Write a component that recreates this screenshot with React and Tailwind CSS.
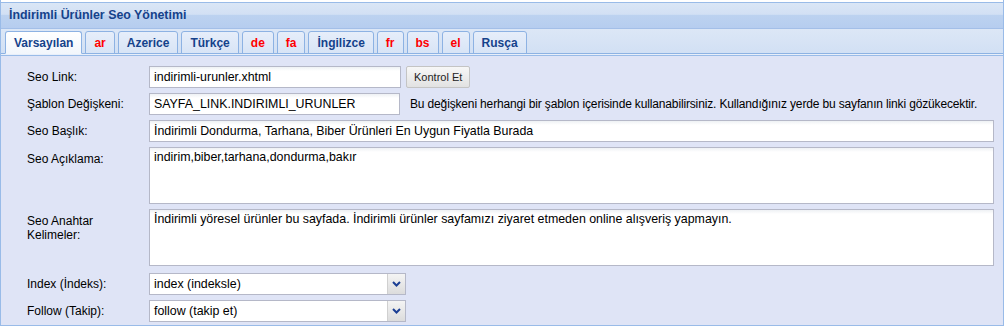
import { useState } from 'react';

const sekmeler = [
    { ad: 'Varsayılan', kod: false },
    { ad: 'ar', kod: true },
    { ad: 'Azerice', kod: false },
    { ad: 'Türkçe', kod: false },
    { ad: 'de', kod: true },
    { ad: 'fa', kod: true },
    { ad: 'İngilizce', kod: false },
    { ad: 'fr', kod: true },
    { ad: 'bs', kod: true },
    { ad: 'el', kod: true },
    { ad: 'Rusça', kod: false },
];

const inputCls =
    'h-[22px] border border-[#b5b8c8] bg-white bg-[linear-gradient(to_bottom,#eef1f4_0px,#ffffff_4px)] px-[4px] text-[12.4px] text-black outline-none';

const alanCls =
    'h-[57px] flex-1 resize-none border border-[#b5b8c8] bg-white bg-[linear-gradient(to_bottom,#eef1f4_0px,#ffffff_4px)] px-[4px] py-[2px] text-[12.4px] leading-[14px] text-black outline-none';

function Satir({ etiket, children, ust = false }) {
    return (
        <div className={`flex ${ust ? 'items-start' : 'items-center'}`}>
            <label className={`w-[122px] shrink-0 text-[12px] leading-[14px] text-black ${ust ? 'pt-[5px]' : ''}`}>
                {etiket}
            </label>
            {children}
        </div>
    );
}

function Secim({ deger }) {
    return (
        <div className="flex h-[22px] w-[257px] border border-[#b5b8c8] bg-white">
            <div className="flex flex-1 items-center px-[4px] text-[12.4px] text-black">{deger}</div>
            <div className="flex w-[18px] items-center justify-center border-l border-[#d0d0d0] bg-[linear-gradient(to_bottom,#f4f4f4,#dcdcdc)]">
                <svg width="9" height="6" viewBox="0 0 9 6">
                    <path d="M1 1 L4.5 4.5 L8 1" fill="none" stroke="#1c3f94" strokeWidth="2" />
                </svg>
            </div>
        </div>
    );
}

export default function App() {
    const [aktif, setAktif] = useState(0);
    const [form, setForm] = useState({
        link: 'indirimli-urunler.xhtml',
        sablon: 'SAYFA_LINK.INDIRIMLI_URUNLER',
        baslik: 'İndirimli Dondurma, Tarhana, Biber Ürünleri En Uygun Fiyatla Burada',
        aciklama: 'indirim,biber,tarhana,dondurma,bakır',
        anahtar: 'İndirimli yöresel ürünler bu sayfada. İndirimli ürünler sayfamızı ziyaret etmeden online alışveriş yapmayın.',
    });

    return (
        <div className="h-[327px] w-[1004px] bg-white font-['Liberation_Sans',Arial,sans-serif]">
            <div className="border-x border-b border-[#99bbe8] pt-[2px]">
                <div className="border-t border-[#99bbe8]">
                    <div className="flex h-[26px] items-center border-b border-[#a3bfe8] bg-[linear-gradient(to_bottom,#dae6f6_0%,#d2e0f4_45%,#bcd2f0_50%,#b6cdef_100%)] pl-[8px] text-[12.4px] font-bold text-[#15428b]">
                        İndirimli Ürünler Seo Yönetimi
                    </div>

                    <div className="flex h-[25px] items-end gap-[3px] border-b border-[#8db2e3] bg-[linear-gradient(to_bottom,#dce7f6,#d2e0f4)] pl-[4px]">
                        {sekmeler.map((s, i) => (
                            <button
                                key={s.ad}
                                onClick={() => setAktif(i)}
                                className={`-mb-px flex h-[23px] items-center rounded-t-[3px] border border-[#8db2e3] px-[8px] text-[12px] font-bold ${
                                    aktif === i
                                        ? 'border-b-[#f2f6fc] bg-[linear-gradient(to_bottom,#ffffff,#f2f6fc)]'
                                        : 'bg-[linear-gradient(to_bottom,#e6eefa,#d8e4f6)]'
                                } ${s.kod ? 'text-[#ff0000]' : 'text-[#15428b]'}`}
                            >
                                {s.ad}
                            </button>
                        ))}
                    </div>
                    <div className="h-[2px] border-b border-[#99bbe8] bg-[#e8effa]" />
                </div>

                <div className="flex flex-col gap-[5px] bg-[#dfe4f6] pb-[3px] pl-[26px] pr-[9px] pt-[10px]">
                    <Satir etiket="Seo Link:">
                        <input
                            value={form.link}
                            onChange={(e) => setForm({ ...form, link: e.target.value })}
                            className={`${inputCls} w-[252px]`}
                        />
                        <button className="ml-[5px] h-[22px] rounded-[2px] border border-[#c4c4c4] bg-[linear-gradient(to_bottom,#f7f7f7,#e2e2e2)] px-[7px] text-[11px] text-[#222]">
                            Kontrol Et
                        </button>
                    </Satir>

                    <Satir etiket="Şablon Değişkeni:">
                        <input
                            value={form.sablon}
                            onChange={(e) => setForm({ ...form, sablon: e.target.value })}
                            className={`${inputCls} w-[251px]`}
                        />
                        <span className="ml-[10px] whitespace-nowrap text-[12px] tracking-[-0.15px] text-black">
                            Bu değişkeni herhangi bir şablon içerisinde kullanabilirsiniz. Kullandığınız yerde bu sayfanın linki gözükecektir.
                        </span>
                    </Satir>

                    <Satir etiket="Seo Başlık:">
                        <input
                            value={form.baslik}
                            onChange={(e) => setForm({ ...form, baslik: e.target.value })}
                            className={`${inputCls} flex-1`}
                        />
                    </Satir>

                    <Satir etiket="Seo Açıklama:" ust>
                        <textarea
                            value={form.aciklama}
                            onChange={(e) => setForm({ ...form, aciklama: e.target.value })}
                            className={alanCls}
                        />
                    </Satir>

                    <Satir etiket={<>Seo Anahtar<br />Kelimeler:</>} ust>
                        <textarea
                            value={form.anahtar}
                            onChange={(e) => setForm({ ...form, anahtar: e.target.value })}
                            className={alanCls}
                        />
                    </Satir>

                    <div className="mt-[2px]">
                        <Satir etiket="Index (İndeks):">
                            <Secim deger="index (indeksle)" />
                        </Satir>
                    </div>

                    <Satir etiket="Follow (Takip):">
                        <Secim deger="follow (takip et)" />
                    </Satir>
                </div>
            </div>
        </div>
    );
}
